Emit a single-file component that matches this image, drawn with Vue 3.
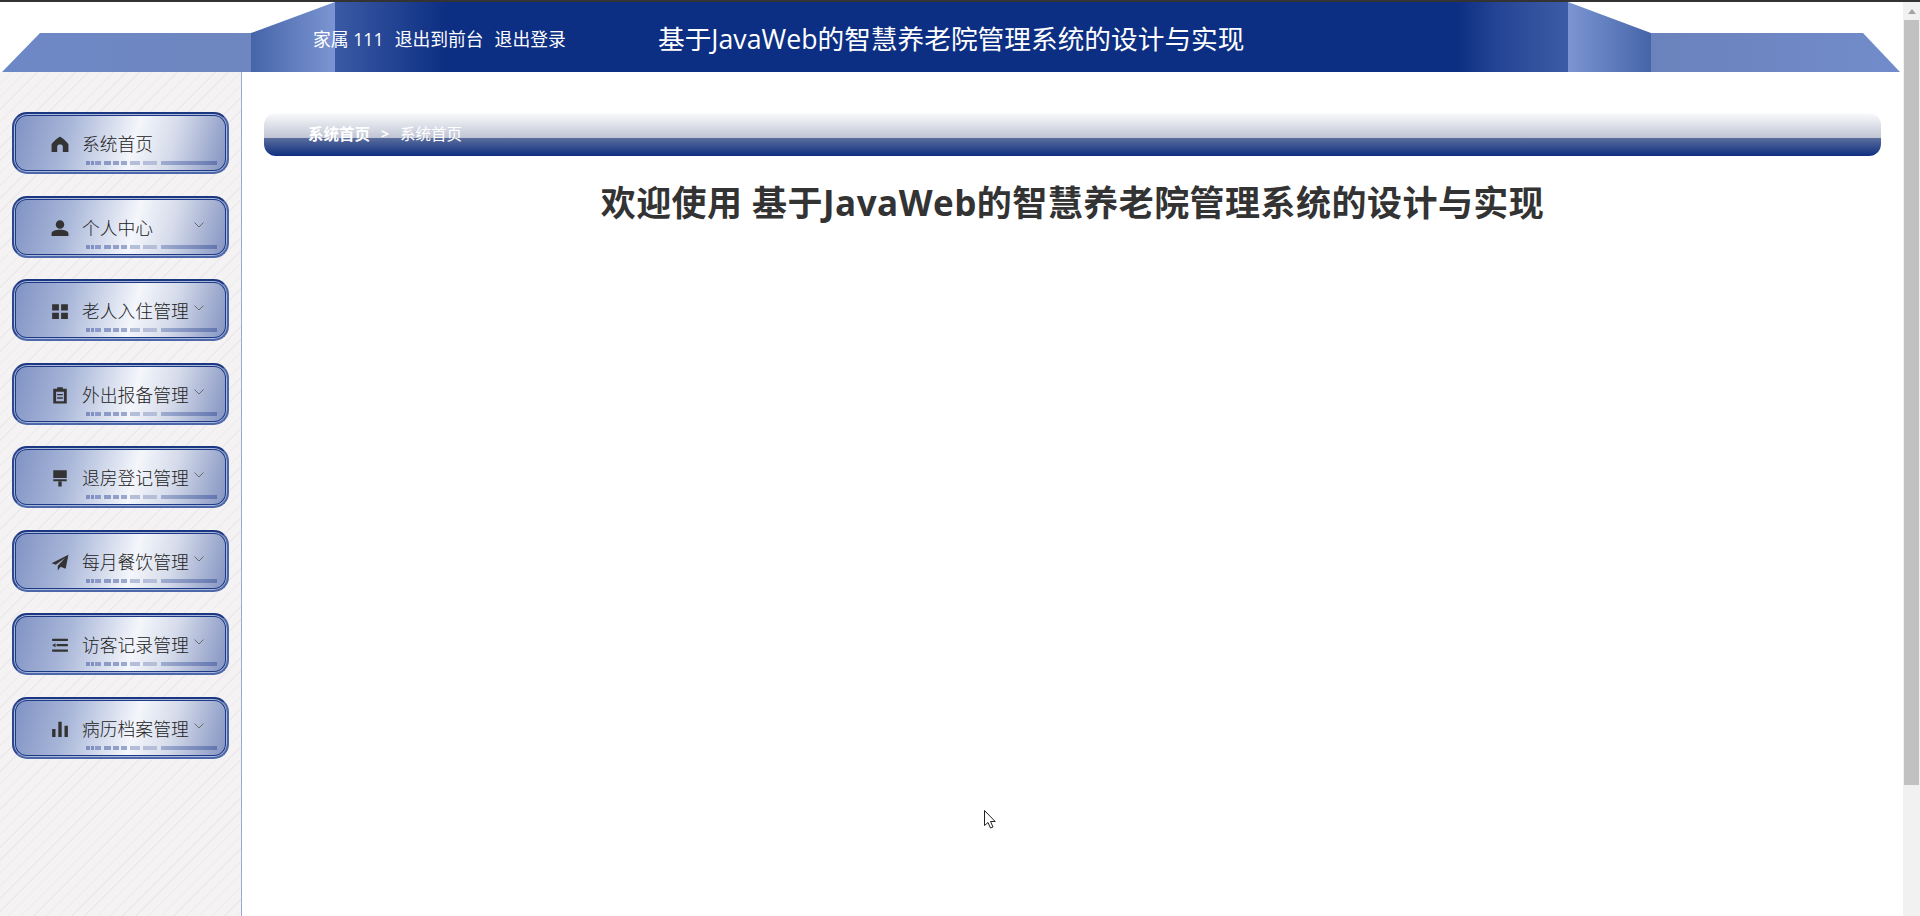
<template>
  <div class="page">
    <div class="top-strip"></div>
    <div class="body-row">
      <div class="content-area">
        <header class="header">
          <div class="wing wing-left"></div>
          <div class="slant slant-left"></div>
          <div class="header-center">
            <div class="user-info">
              <span class="user-name">家属 111</span>
              <a class="user-link">退出到前台</a>
              <a class="user-link">退出登录</a>
            </div>
            <div class="system-title">基于JavaWeb的智慧养老院管理系统的设计与实现</div>
          </div>
          <div class="slant slant-right"></div>
          <div class="wing wing-right"></div>
        </header>

        <div class="main-row">
          <aside class="sidebar">
            <div v-for="item in menus" :key="item.name" class="menu-item">
              <svg class="menu-icon" viewBox="0 0 16 16">
                <path :d="item.icon" fill-rule="evenodd" />
              </svg>
              <span class="menu-name">{{ item.name }}</span>
              <svg v-if="item.sub" class="menu-arrow" viewBox="0 0 10 6">
                <polyline points="0.5,0.5 5,5 9.5,0.5" />
              </svg>
            </div>
          </aside>

          <main class="main">
            <div class="breadcrumb">
              <span class="crumb crumb-first">系统首页</span>
              <span class="crumb-sep">&gt;</span>
              <span class="crumb">系统首页</span>
            </div>
            <h1 class="welcome">欢迎使用 基于JavaWeb的智慧养老院管理系统的设计与实现</h1>
          </main>
        </div>
      </div>

      <div class="scrollbar">
        <div class="scroll-up"></div>
        <div class="scroll-thumb"></div>
      </div>
    </div>

    <svg class="cursor" viewBox="0 0 12 19">
      <path d="M0.5 0.5V15.5L4 12.5L6.5 18L9 17L6.5 11.5H11.2Z" />
    </svg>
  </div>
</template>

<script setup>
const menus = [
  { name: '系统首页', sub: false, icon: 'M8 1.5C9 1.5 15.5 7 15.5 8.5V15H10.5V10.5C10.5 9 9.5 8.5 8 8.5S5.5 9 5.5 10.5V15H.5V8.5C.5 7 7 1.5 8 1.5Z' },
  { name: '个人中心', sub: true, icon: 'M8 1A3.8 3.8 0 1 1 8 8.6A3.8 3.8 0 1 1 8 1ZM.5 15V13C.5 10.6 4 9.6 8 9.6S15.5 10.6 15.5 13V15Z' },
  { name: '老人入住管理', sub: true, icon: 'M1 2H7V7.5H1ZM9 2H15V7.5H9ZM1 9.5H7V15H1ZM9 9.5H15V15H9Z' },
  { name: '外出报备管理', sub: true, icon: 'M5.5 1H10.5V2.5H14V15.5H2V2.5H5.5ZM4.5 5V13.5H11.5V5ZM5.5 7H10.5V8.3H5.5ZM5.5 10H10.5V11.3H5.5Z' },
  { name: '退房登记管理', sub: true, icon: 'M2 1H14V8H2ZM2 9H14V10.8H2ZM6.5 11H9.5V15.5H6.5Z' },
  { name: '每月餐饮管理', sub: true, icon: 'M15.5 1.5L13 14L8.6 12.2L6 15.5V11.4L12.5 4.5L4.2 10.4L.5 9Z' },
  { name: '访客记录管理', sub: true, icon: 'M1 2.5H15V4.5H1ZM5 7.2H15V9.2H5ZM1 8.2L4 6.4V10ZM1 12H15V14H1Z' },
  { name: '病历档案管理', sub: true, icon: 'M1 8H4V15H1ZM6.5 1.5H9.5V15H6.5ZM12 5H15V15H12Z' }
]
</script>

<style>
html,
body {
  margin: 0;
  overflow: hidden;
}
</style>

<style scoped>
.page {
  position: relative;
  height: 916px;
  display: flex;
  flex-direction: column;
  overflow: hidden;
  background: #fff;
  font-family: "Open Sans", "Noto Sans CJK SC", sans-serif;
}

.top-strip {
  height: 2px;
  flex: none;
  background: #333;
}

.body-row {
  flex: 1;
  display: flex;
  min-height: 0;
}

.content-area {
  flex: 1;
  min-width: 0;
  display: flex;
  flex-direction: column;
}

.header {
  flex: none;
  height: 70px;
  display: flex;
}

.wing {
  flex: none;
  height: 70px;
}

.wing-left {
  width: 251px;
  background: linear-gradient(90deg, #6d88c6, #6e87c0);
  clip-path: polygon(40px 31px, 100% 31px, 100% 100%, 2px 100%);
}

.wing-right {
  width: 252px;
  background: linear-gradient(90deg, #6a83bd, #728ccb);
  clip-path: polygon(0 31px, 212px 31px, 249px 100%, 0 100%);
}

.slant {
  flex: none;
  height: 70px;
}

.slant-left {
  width: 84px;
  background: linear-gradient(90deg, #4565a9, #7c95d2);
  clip-path: polygon(0 31px, 100% 0, 100% 100%, 0 100%);
}

.slant-right {
  width: 83px;
  background: linear-gradient(90deg, #7c95d2, #4565a9);
  clip-path: polygon(0 0, 100% 31px, 100% 100%, 0 100%);
}

.header-center {
  flex: 1;
  display: flex;
  align-items: center;
  color: #fff;
  background: linear-gradient(90deg, #3b5aa4 0%, #0d2f83 9%, #0d2f83 91%, #264695 94.6%, #3d5ca6 100%);
}

.user-info {
  position: relative;
  z-index: 1;
  flex: none;
  width: 345px;
  display: flex;
  gap: 11px;
  margin-left: -22px;
  padding-top: 1px;
  font-size: 17.8px;
}

.user-link {
  color: #fff;
}

.system-title {
  font-size: 26.7px;
  white-space: nowrap;
}

.main-row {
  flex: 1;
  display: flex;
  min-height: 0;
}

.sidebar {
  flex: none;
  width: 242px;
  padding: 40px 0 0 12px;
  box-sizing: border-box;
  border-right: 1px solid #9aa8cf;
  display: flex;
  flex-direction: column;
  gap: 21.5px;
  background: #f4f2f3 repeating-linear-gradient(135deg, #f4f2f3 0, #f4f2f3 8px, #ebe9eb 8px, #ebe9eb 9px);
}

.menu-item {
  position: relative;
  flex: none;
  box-sizing: border-box;
  width: 217px;
  height: 62px;
  display: flex;
  align-items: center;
  padding: 2px 0 0 37px;
  border: 2px solid #2c468f;
  border-color: #1c3782 #4c68aa #4c68aa #2c468f;
  border-radius: 15px;
  box-shadow: inset 0 0 0 1px #a9b8da, inset 0 0 0 2px #1f3a85;
  background: linear-gradient(105deg, #7e91c3 0%, #a8b6d8 26%, #f4f6fb 56%, #d5dbea 73%, #8191c0 100%);
  color: #222;
}

.menu-item::after {
  content: "";
  position: absolute;
  left: 72px;
  top: 47px;
  width: 131px;
  height: 4px;
  background: linear-gradient(90deg,
    #7e8fc0 0, #7e8fc0 4px, transparent 4px, transparent 5px,
    #7e8fc0 5px, #7e8fc0 8px, transparent 8px, transparent 9px,
    #8b9ac6 9px, #8b9ac6 15px, transparent 15px, transparent 18px,
    #8b9ac6 18px, #8b9ac6 25px, transparent 25px, transparent 27px,
    #939fc9 27px, #939fc9 33px, transparent 33px, transparent 35px,
    #9ba8cd 35px, #9ba8cd 41px, transparent 41px, transparent 44px,
    #b4bed9 44px, #b4bed9 54px, transparent 54px, transparent 57px,
    #b4bed9 57px, #b4bed9 71px, transparent 71px, transparent 75px,
    #9fadcf 75px, #6376af 131px);
}

.menu-icon {
  flex: none;
  width: 18px;
  height: 18px;
  fill: #333;
}

.menu-name {
  margin-left: 13px;
  font-size: 17.8px;
  font-weight: 300;
  line-height: 24px;
  white-space: nowrap;
}

.menu-arrow {
  position: absolute;
  left: 180px;
  top: 24px;
  width: 10px;
  height: 6px;
  fill: none;
  stroke: #555;
  stroke-width: 0.8;
}

.main {
  flex: 1;
  min-width: 0;
  padding: 41px 22px 0;
}

.breadcrumb {
  height: 43px;
  box-sizing: border-box;
  display: flex;
  align-items: flex-end;
  padding: 0 0 12px 44px;
  border-radius: 12px;
  color: #fff;
  font-size: 15.5px;
  line-height: 20px;
  background: linear-gradient(180deg, #fbfbfc 0, #bfc4d4 25px, #5a6d9c 25px, #0f2f80 43px);
}

.crumb-first {
  font-weight: 700;
}

.crumb-sep {
  margin: 0 11px;
  font-size: 14px;
  font-weight: 700;
}

.welcome {
  margin: 22px 0 0;
  text-align: center;
  font-size: 35px;
  letter-spacing: 0.47px;
  line-height: 50px;
  font-weight: 700;
  color: #333;
}

.scrollbar {
  flex: none;
  width: 17px;
  background: #f1f1f1;
  display: flex;
  flex-direction: column;
  align-items: center;
}

.scroll-up {
  flex: none;
  margin-top: 7px;
  width: 0;
  height: 0;
  border-left: 4px solid transparent;
  border-right: 4px solid transparent;
  border-bottom: 5px solid #a3a3a3;
}

.scroll-thumb {
  flex: none;
  width: 15px;
  height: 765px;
  margin-top: 6px;
  background: #c1c1c1;
}

.cursor {
  position: absolute;
  left: 984px;
  top: 810px;
  width: 12px;
  height: 19px;
  fill: #fff;
  stroke: #222;
  stroke-width: 1;
}
</style>
